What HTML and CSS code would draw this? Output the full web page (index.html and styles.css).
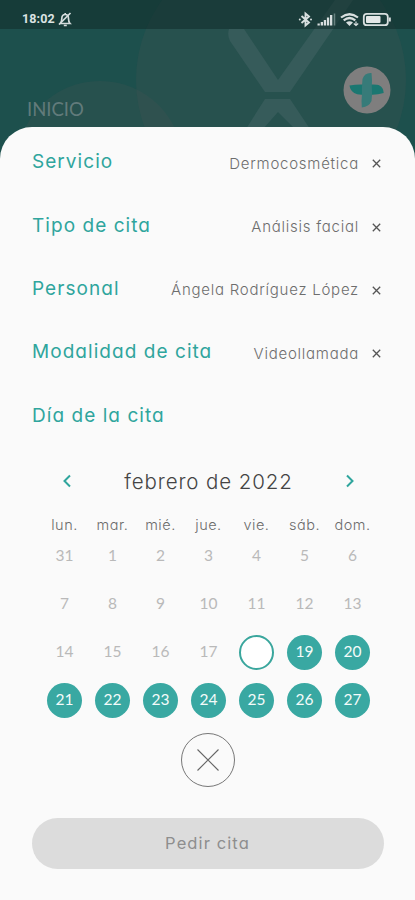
FILE: index.html
```
<!DOCTYPE html>
<html lang="es">
<head>
<meta charset="UTF-8" />
<meta name="viewport" content="width=device-width, initial-scale=1" />
<title>Pedir cita</title>
<link rel="stylesheet" href="styles.css">
</head>
<body>

<header class="top">
  <svg class="top-bg" width="415" height="170" viewBox="0 0 415 170">
    <circle cx="100" cy="164" r="83" fill="#465555" fill-opacity=".25" />
    <circle cx="271" cy="80" r="135" fill="#465555" fill-opacity=".25" />
    <path d="M229 29h15l34 51 57-80h18l-63 92h-25l-35-51q-3-6-1-12zM265 99h25l20 30h-15l-17-17-15 17h-17z" fill="#365b5a" />
  </svg>

  <div class="status-bar">
    <span class="time">18:02</span>
    <svg class="bell" width="14" height="16" viewBox="0 0 14 16">
      <path d="M2.5 12.5h9.5q-1.5-1.5-1.5-5q0-4-3.3-4t-3.4 4q0 3-1.3 5zM5.8 14.5h3M7.2 2v1" fill="none" stroke="#d5dddd" stroke-width="1.7" />
      <path d="M1 13.5L12.5 2" stroke="#d5dddd" stroke-width="1.7" />
    </svg>
    <svg class="signals" width="94" height="18" viewBox="0 0 94 18">
      <path d="M3.500 6l7.500 6.500-3.500 3V3.500l3.500 3L3.500 13" fill="none" stroke="#d8dfdf" stroke-width="1.9" />
      <circle cx="1.8" cy="9.5" r="1" fill="#d8dfdf" />
      <circle cx="13" cy="9.5" r="1" fill="#d8dfdf" />
      <path d="M19.500 13.500h2.300v2h-2.300zM22.700 12H25v3.500h-2.300zM25.800 10h2.300v5.500h-2.300zM28.900 7.500h2.300v8h-2.300zM32 5h2.300v10.500H32z" fill="#d8dfdf" />
      <path d="M36.500 3.500v12" stroke="#688280" stroke-width="1.500" />
      <path d="M43 7.500q8.500-6.500 17 0M45.700 10.300q5.800-4.600 11.600 0" fill="none" stroke="#d8dfdf" stroke-width="2.200" />
      <path d="M48 12.500q3.500-2.400 7 0l-3.500 3.500z" fill="#d8dfdf" />
      <path d="M58 11.500v4M55.800 13.500l2.200 2 2.200-2" fill="none" stroke="#d8dfdf" stroke-width="1.200" />
      <rect x="65.800" y="3.800" width="24" height="11.400" rx="3" fill="none" stroke="#d8dfdf" stroke-width="1.800" />
      <rect x="68" y="6" width="14.500" height="7" rx="1" fill="#e3e7e7" />
      <path d="M91.800 7.500v4" stroke="#d8dfdf" stroke-width="2" />
    </svg>
  </div>

  <div class="title-row">
    <h1>INICIO</h1>
    <svg class="logo" width="48" height="48" viewBox="0 0 48 48">
      <circle cx="24" cy="24" r="23.500" fill="#7f7e7e" />
      <path d="M6.500 19.500q8-1.500 17.500-.8q10-.8 12.500.8q4 2 4.200 7.500q-9 2.800-17 1.300q-9 1.200-12.500-1.300q-4-2.500-4.700-7.500z" fill="#1b7771" />
      <path d="M28.500 7q-7-.5-9 6-.8 10-.5 15-.8 7-.2 13.500 7.200-.8 9.700-6.500 1-7 .3-14 .5-8-.3-14z" fill="#377b79" />
    </svg>
  </div>
</header>

<main class="sheet">
  <section class="fields">
    <div class="field">
      <h2>Servicio</h2>
      <span class="value">Dermocosmética</span>
      <svg class="clear" width="9" height="9" viewBox="0 0 9 9"><path d="M.8.8l7.400 7.400M8.200.8L.8 8.200" /></svg>
    </div>
    <div class="field">
      <h2>Tipo de cita</h2>
      <span class="value">Análisis facial</span>
      <svg class="clear" width="9" height="9" viewBox="0 0 9 9"><path d="M.8.8l7.400 7.400M8.200.8L.8 8.200" /></svg>
    </div>
    <div class="field">
      <h2>Personal</h2>
      <span class="value">Ángela Rodríguez López</span>
      <svg class="clear" width="9" height="9" viewBox="0 0 9 9"><path d="M.8.8l7.400 7.400M8.200.8L.8 8.200" /></svg>
    </div>
    <div class="field">
      <h2>Modalidad de cita</h2>
      <span class="value">Videollamada</span>
      <svg class="clear" width="9" height="9" viewBox="0 0 9 9"><path d="M.8.8l7.400 7.400M8.200.8L.8 8.200" /></svg>
    </div>
    <div class="field">
      <h2>Día de la cita</h2>
    </div>
  </section>

  <section class="calendar">
    <div class="month">
      <svg class="arrow" width="10" height="14" viewBox="0 0 10 14"><path d="M8 1.500L2.500 7 8 12.500" /></svg>
      <span class="month-name">febrero de 2022</span>
      <svg class="arrow" width="10" height="14" viewBox="0 0 10 14"><path d="M2 1.500L7.500 7 2 12.500" /></svg>
    </div>
    <div class="weekdays">
      <span>lun.</span><span>mar.</span><span>mié.</span><span>jue.</span><span>vie.</span><span>sáb.</span><span>dom.</span>
    </div>
    <div class="days">
      <span>31</span><span>1</span><span>2</span><span>3</span><span>4</span><span>5</span><span>6</span>
      <span>7</span><span>8</span><span>9</span><span>10</span><span>11</span><span>12</span><span>13</span>
      <span>14</span><span>15</span><span>16</span><span>17</span><span class="today"></span><span class="free">19</span><span class="free">20</span>
      <span class="free">21</span><span class="free">22</span><span class="free">23</span><span class="free">24</span><span class="free">25</span><span class="free">26</span><span class="free">27</span>
    </div>
  </section>

  <button class="close" aria-label="Cerrar">
    <svg width="22" height="22" viewBox="0 0 22 22"><path d="M.5.500l21 21M21.500.500l-21 21" /></svg>
  </button>
  <button class="submit" disabled>Pedir cita</button>
</main>

</body>
</html>
```
FILE: styles.css
```
* {
  box-sizing: border-box;
}
body {
  margin: 0;
  height: 900px;
  overflow: hidden;
  background: #1d504d;
  font-family: Inter, Lato, sans-serif;
  font-feature-settings: "cv11";
}
h1, h2 {
  margin: 0;
  font-weight: 400;
}
.top {
  position: relative;
  height: 127px;
}
.top-bg {
  position: absolute;
  top: 0;
  left: 0;
}
.status-bar {
  position: relative;
  height: 29px;
  display: flex;
  align-items: center;
  padding: 8px 18px 0 22px;
  background: rgba(17, 43, 42, 0.55);
}
.time {
  color: #dce3e3;
  font: 700 12.5px Roboto, sans-serif;
  letter-spacing: 0.1px;
}
.bell {
  margin-left: 3px;
}
.signals {
  margin-left: auto;
  margin-right: 5px;
}
.title-row {
  position: relative;
  display: flex;
  justify-content: space-between;
  align-items: flex-start;
  padding: 37px 24px 0 27px;
}
h1 {
  margin-top: 32px;
  color: #627b7b;
  font: 400 18.5px/22px Lato, sans-serif;
}
.sheet {
  position: relative;
  height: 773px;
  padding: 3px 32px 0;
  background: #fafafa;
  border-radius: 32px 32px 0 0;
  display: flex;
  flex-direction: column;
  align-items: center;
}
.fields {
  width: 100%;
}
.field {
  height: 63.4px;
  display: flex;
  align-items: center;
}
h2 {
  color: #2fa59d;
  font-size: 19px;
  letter-spacing: 1.05px;
}
.value {
  margin-left: auto;
  padding-top: 3px;
  color: #6d6d6d;
  font-size: 15px;
  font-weight: 300;
  letter-spacing: 0.75px;
}
.clear {
  margin: 4px 2px 0 13px;
  fill: none;
  stroke: #555;
  stroke-width: 1.3;
}
.calendar {
  width: 336px;
  margin-left: 2px;
}
.month {
  height: 69px;
  display: flex;
  align-items: center;
  justify-content: space-between;
  padding: 0 21px;
}
.month-name {
  color: #444;
  font-size: 20.5px;
  font-weight: 300;
  letter-spacing: 0.9px;
}
.arrow {
  fill: none;
  stroke: #2fa59d;
  stroke-width: 2;
}
.weekdays, .days {
  display: grid;
  grid-template-columns: repeat(7, 48px);
  justify-items: center;
  align-items: center;
}
.weekdays {
  height: 16px;
  color: #6c6c6c;
  font-size: 14.5px;
  font-weight: 300;
  letter-spacing: 0.5px;
}
.days {
  grid-auto-rows: 48px;
  color: #b9b9b9;
  font-family: Lato, sans-serif;
  font-size: 15.5px;
}
.days span {
  padding-bottom: 2px;
}
.days .free, .days .today {
  width: 35px;
  height: 35px;
  margin-top: 1px;
  padding: 0;
  border-radius: 50%;
  line-height: 33px;
  text-align: center;
}
.days .free {
  background: #39a8a2;
  color: #f4fbfa;
}
.days .today {
  border: 2px solid #3aa69d;
  background: #fff;
}
button {
  border: none;
  padding: 0;
  font-family: inherit;
  font-feature-settings: inherit;
}
.close {
  width: 54px;
  height: 54px;
  margin-top: 9px;
  display: flex;
  align-items: center;
  justify-content: center;
  border: 1px solid #777;
  border-radius: 50%;
  background: transparent;
}
.close path {
  stroke: #666;
  stroke-width: 1.1;
}
.submit {
  width: 352px;
  height: 51px;
  margin-top: 31px;
  border-radius: 26px;
  background: #dcdcdc;
  color: #8e8e8e;
  font-size: 16.5px;
  letter-spacing: 1.1px;
}
```
